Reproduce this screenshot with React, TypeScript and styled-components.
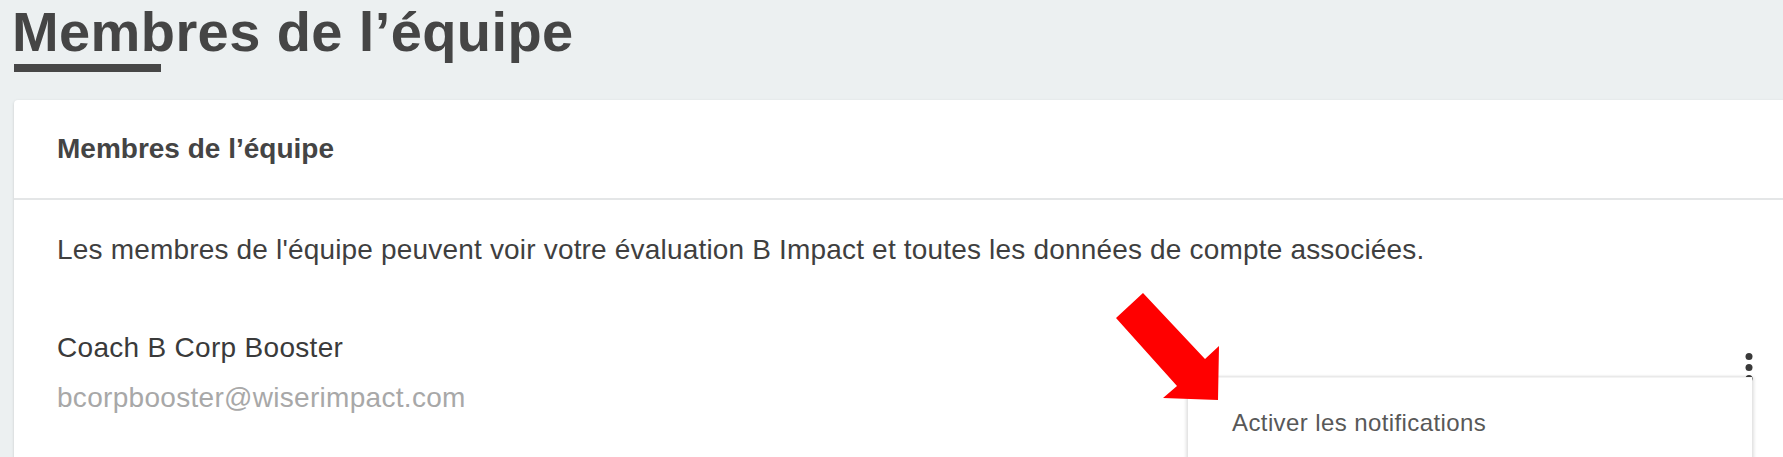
import styled, { createGlobalStyle } from "styled-components";

const GlobalStyle = createGlobalStyle`
  html, body {
    margin: 0;
    padding: 0;
    overflow: hidden;
    background: #ecf0f1;
    font-family: "Liberation Sans", Arial, sans-serif;
  }
`;

const Page = styled.div`
  position: relative;
  width: 1797px;
  padding-left: 14px;
  box-sizing: border-box;
`;

const Title = styled.h1`
  margin: 0;
  font-size: 56px;
  font-weight: 700;
  line-height: 64px;
  letter-spacing: 0.4px;
  color: #454545;
  margin-left: -2px;

  &::after {
    content: "";
    display: block;
    width: 147px;
    height: 8px;
    margin-left: 2px;
    background: #474747;
  }
`;

const Card = styled.section`
  margin-top: 28px;
  background: #fff;
  border-radius: 4px;
  box-shadow: 0 1px 3px rgba(0, 0, 0, 0.16);
`;

const CardHeader = styled.div`
  height: 98px;
  display: flex;
  align-items: center;
  padding: 0 43px;
  border-bottom: 2px solid #e4e6e7;
  font-size: 28px;
  font-weight: 700;
  color: #444;
`;

const CardBody = styled.div`
  padding: 34px 43px 80px;
`;

const Description = styled.p`
  margin: 0;
  font-size: 28px;
  line-height: 32px;
  letter-spacing: 0.18px;
  color: #3f3f3f;
`;

const MemberRow = styled.div`
  margin-top: 66px;
  display: flex;
  justify-content: space-between;
  align-items: flex-start;
`;

const MemberInfo = styled.div`
  display: flex;
  flex-direction: column;
  gap: 18px;
`;

const MemberText = styled.span<{ $muted?: boolean }>`
  font-size: 28px;
  line-height: 32px;
  letter-spacing: 0.3px;
  color: ${(p) => (p.$muted ? "#a8a8a8" : "#3a3a3a")};
`;

const Actions = styled.div`
  position: relative;
  padding-top: 21px;
  padding-right: 1px;
`;

const Menu = styled.ul`
  position: absolute;
  top: 45px;
  right: 2px;
  width: 564px;
  height: 140px;
  margin: 0;
  padding: 31px 0 0 44px;
  box-sizing: border-box;
  list-style: none;
  background: #fff;
  border-top: 1px solid #f3f3f3;
  box-shadow: -2px 0 3px rgba(0, 0, 0, 0.12), 2px 0 3px rgba(0, 0, 0, 0.12);
  z-index: 2;
`;

const MenuItem = styled.li`
  font-size: 24px;
  line-height: 28px;
  letter-spacing: 0.4px;
  color: #585858;
`;

const Arrow = styled.svg`
  position: absolute;
  left: 1110px;
  top: 288px;
  z-index: 3;
  pointer-events: none;
`;

function KebabIcon() {
  return (
    <svg width="8" height="30" viewBox="0 0 8 30">
      <circle cx="4" cy="3.5" r="3.5" fill="#3a3a3a" />
      <circle cx="4" cy="14.5" r="3.5" fill="#3a3a3a" />
      <circle cx="4" cy="25.5" r="3.5" fill="#3a3a3a" />
    </svg>
  );
}

export default function App() {
  return (
    <>
      <GlobalStyle />
      <Page>
        <Title>Membres de l’équipe</Title>
        <Card>
          <CardHeader>Membres de l’équipe</CardHeader>
          <CardBody>
            <Description>
              Les membres de l'équipe peuvent voir votre évaluation B Impact et
              toutes les données de compte associées.
            </Description>
            <MemberRow>
              <MemberInfo>
                <MemberText>Coach B Corp Booster</MemberText>
                <MemberText $muted>bcorpbooster@wiserimpact.com</MemberText>
              </MemberInfo>
              <Actions>
                <KebabIcon />
                <Menu>
                  <MenuItem>Activer les notifications</MenuItem>
                </Menu>
              </Actions>
            </MemberRow>
          </CardBody>
        </Card>
        <Arrow width="115" height="116" viewBox="1110 288 115 116">
          <polygon
            points="1143,293 1205,359 1219,346 1218,400 1163,398 1177,386 1116,318"
            fill="#ff0000"
          />
        </Arrow>
      </Page>
    </>
  );
}
